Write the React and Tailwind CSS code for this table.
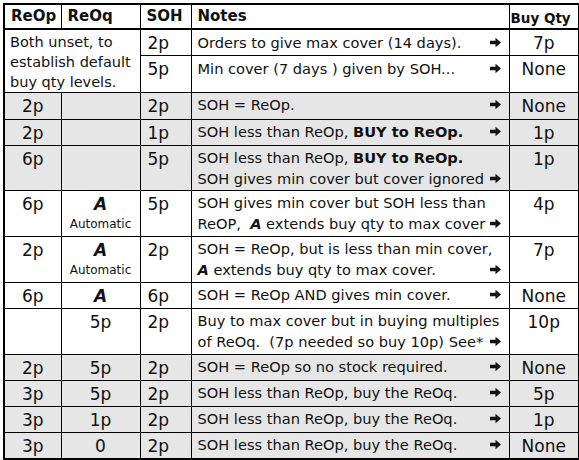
import React from "react";

const Arrow = () => (
    <svg width="11" height="11" viewBox="0 0 10 10" className="shrink-0 ml-1">
        <path d="M0 3.3h5V0.6L10 5 5 9.4V6.7H0z" fill="#111" />
    </svg>
);

// one line of notes text, arrow pushed to the right edge when asked
const Line = ({ children, arrow }) => (
    <div className="flex items-center justify-between whitespace-nowrap">
        <span>{children}</span>
        {arrow && <Arrow />}
    </div>
);

const AutoA = ({ label }) => (
    <div className="flex flex-col items-center">
        <span className="text-[17px] font-bold italic leading-[22px]">A</span>
        {label && <span className="text-[12px] leading-[18px]">Automatic</span>}
    </div>
);

const rows = [
    { h: "h-[27px]", gray: true, reop: "2p", reoq: "", soh: "2p", notes: [["SOH = ReOp.", true]], buy: "None" },
    { h: "h-[26px]", gray: true, reop: "2p", reoq: "", soh: "1p", notes: [[<>SOH less than ReOp, <b>BUY to ReOp.</b></>, true]], buy: "1p" },
    {
        h: "h-[45px]", gray: true, reop: "6p", reoq: "", soh: "5p",
        notes: [[<>SOH less than ReOp, <b>BUY to ReOp.</b></>, false], ["SOH gives min cover but cover ignored", true]],
        buy: "1p"
    },
    {
        h: "h-[46px]", reop: "6p", reoq: <AutoA label />, soh: "5p",
        notes: [["SOH gives min cover but SOH less than", false], [<>ReOP,&nbsp; <b><i>A</i></b> extends buy qty to max cover</>, true]],
        buy: "4p"
    },
    {
        h: "h-[46px]", reop: "2p", reoq: <AutoA label />, soh: "2p",
        notes: [["SOH = ReOp, but is less than min cover,", false], [<><b><i>A</i></b> extends buy qty to max cover.</>, true]],
        buy: "7p"
    },
    { h: "h-[26px]", reop: "6p", reoq: <AutoA />, soh: "6p", notes: [["SOH = ReOp AND gives min cover.", true]], buy: "None" },
    {
        h: "h-[46px]", reop: "", reoq: "5p", soh: "2p",
        notes: [["Buy to max cover but in buying multiples", false], [<>of ReOq.&nbsp; (7p needed so buy 10p) See*</>, true]],
        buy: "10p"
    },
    { h: "h-[26px]", gray: true, reop: "2p", reoq: "5p", soh: "2p", notes: [["SOH = ReOp so no stock required.", true]], buy: "None" },
    { h: "h-[26px]", gray: true, reop: "3p", reoq: "5p", soh: "2p", notes: [["SOH less than ReOp, buy the ReOq.", true]], buy: "5p" },
    { h: "h-[26px]", gray: true, reop: "3p", reoq: "1p", soh: "2p", notes: [["SOH less than ReOp, buy the ReOq.", true]], buy: "1p" },
    { h: "h-[26px]", gray: true, reop: "3p", reoq: "0", soh: "2p", notes: [["SOH less than ReOp, buy the ReOq.", true]], buy: "None" },
];

const num = "text-[17px] leading-[22px] align-top border border-black pt-[2px]";
const notesCell = "text-[14.6px] leading-[21px] align-top border border-black pl-[6px] pr-[8px] pt-[1px]";

export default function App() {
    return (
        <div className="w-[579px] h-[460px] bg-white pl-[3px] pt-[3px] text-[#111]" style={{ fontFamily: '"DejaVu Sans", sans-serif' }}>
            <table className="border-collapse table-fixed w-[575px] border-2 border-black">
                <colgroup>
                    <col className="w-[57px]" />
                    <col className="w-[79px]" />
                    <col className="w-[51px]" />
                    <col className="w-[318px]" />
                    <col className="w-[70px]" />
                </colgroup>
                <thead>
                    <tr className="h-[24px] border-b-2 border-black">
                        <th className="border border-black text-left font-bold text-[15px] pl-[6px]">ReOp</th>
                        <th className="border border-black text-left font-bold text-[15px] pl-[6px]">ReOq</th>
                        <th className="border border-black text-left font-bold text-[15px] pl-[6px]">SOH</th>
                        <th className="border border-black text-left font-bold text-[15px] pl-[6px]">Notes</th>
                        <th className="border border-black text-left font-bold text-[13.5px] pl-[1px] pt-[3px]">Buy Qty</th>
                    </tr>
                </thead>
                <tbody>
                    <tr className="h-[26px]">
                        <td rowSpan={2} colSpan={2} className="text-[14.5px] leading-[20px] align-top border border-black pl-[5px] pt-[2px]">
                            Both unset, to establish default buy qty levels.
                        </td>
                        <td className={num + " pl-[7px]"}>2p</td>
                        <td className={notesCell + " pt-[2px]"}>
                            <Line arrow>Orders to give max cover (14 days).</Line>
                        </td>
                        <td className={num + " text-center"}>7p</td>
                    </tr>
                    <tr className="h-[36px]">
                        <td className={num + " pl-[7px]"}>5p</td>
                        <td className={notesCell + " pt-[2px]"}>
                            <Line arrow>Min cover (7 days ) given by SOH...</Line>
                        </td>
                        <td className={num + " text-center"}>None</td>
                    </tr>
                    {rows.map((r, i) => {
                        const bg = r.gray ? " bg-[#e6e6e6]" : " bg-white";
                        return (
                            <tr key={i} className={r.h}>
                                <td className={num + bg + " text-center"}>{r.reop}</td>
                                <td className={num + bg + " text-center"}>{r.reoq}</td>
                                <td className={num + bg + " pl-[7px]"}>{r.soh}</td>
                                <td className={notesCell + bg}>
                                    {r.notes.map(([t, a], j) => (
                                        <Line key={j} arrow={a}>{t}</Line>
                                    ))}
                                </td>
                                <td className={num + bg + " text-center"}>{r.buy}</td>
                            </tr>
                        );
                    })}
                </tbody>
            </table>
        </div>
    );
}
